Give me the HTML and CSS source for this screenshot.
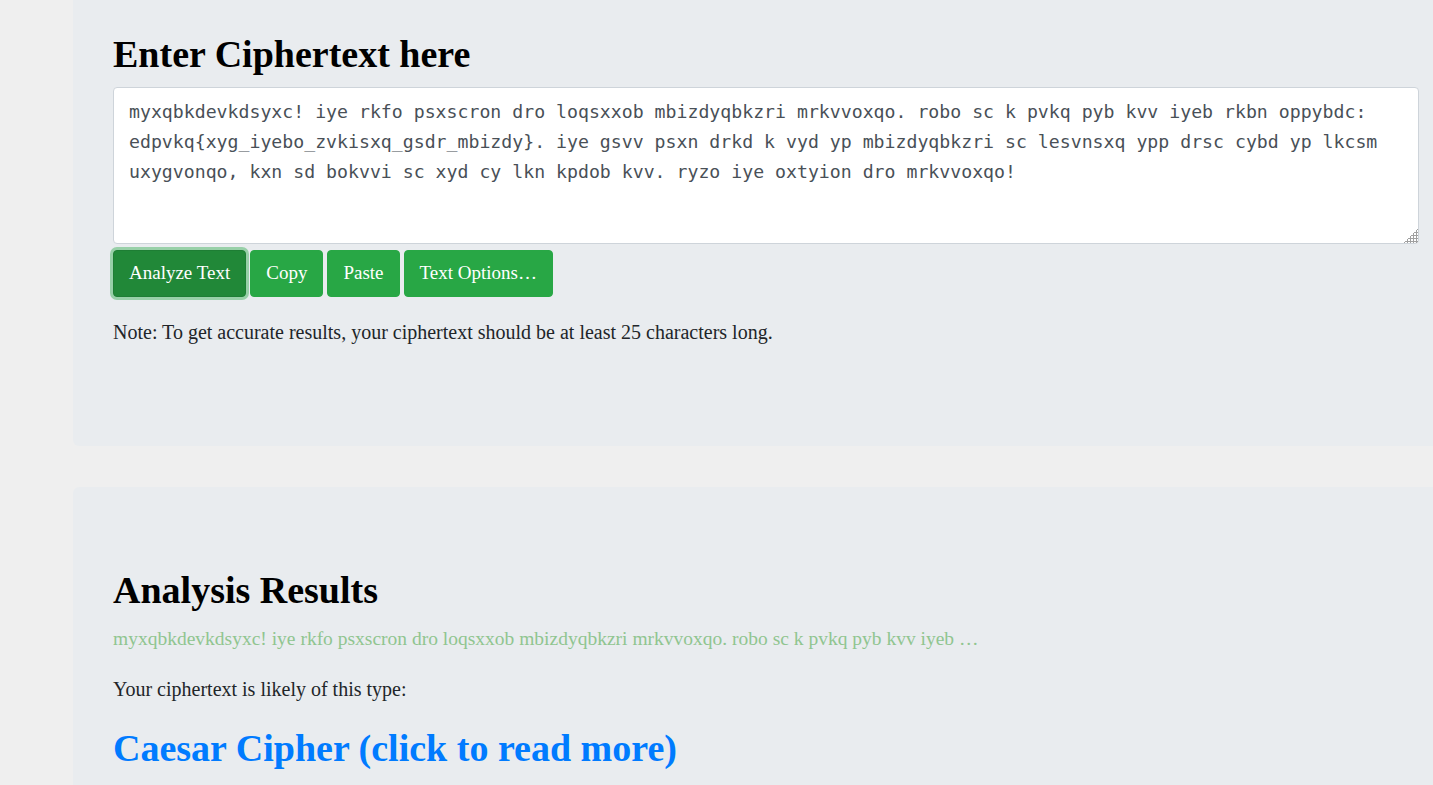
FILE: index.html
```html
<!DOCTYPE html>
<html>
<head>
<meta charset="utf-8">
<title>Cipher Identifier</title>
<link rel="stylesheet" href="styles.css">
</head>
<body>
<div class="page">
  <section class="card card-input">
    <h1 class="title">Enter Ciphertext here</h1>
    <textarea class="cipher-box" spellcheck="false">myxqbkdevkdsyxc! iye rkfo psxscron dro loqsxxob mbizdyqbkzri mrkvvoxqo. robo sc k pvkq pyb kvv iyeb rkbn oppybdc: edpvkq{xyg_iyebo_zvkisxq_gsdr_mbizdy}. iye gsvv psxn drkd k vyd yp mbizdyqbkzri sc lesvnsxq ypp drsc cybd yp lkcsm uxygvonqo, kxn sd bokvvi sc xyd cy lkn kpdob kvv. ryzo iye oxtyion dro mrkvvoxqo!</textarea>
    <div class="btn-row">
      <button class="btn btn-active">Analyze Text</button>
      <button class="btn">Copy</button>
      <button class="btn">Paste</button>
      <button class="btn">Text Options…</button>
    </div>
    <p class="note">Note: To get accurate results, your ciphertext should be at least 25 characters long.</p>
  </section>
  <section class="card card-results">
    <h2 class="title title-results">Analysis Results</h2>
    <p class="preview">myxqbkdevkdsyxc! iye rkfo psxscron dro loqsxxob mbizdyqbkzri mrkvvoxqo. robo sc k pvkq pyb kvv iyeb …</p>
    <p class="likely">Your ciphertext is likely of this type:</p>
    <h2 class="result"><a href="#">Caesar Cipher (click to read more)</a></h2>
  </section>
</div>
</body>
</html>
```
FILE: styles.css
```css
html, body {
  margin: 0;
  padding: 0;
  background: #efefef;
  overflow: hidden;
  height: 785px;
}
body {
  font-family: "Liberation Serif", "Times New Roman", serif;
  color: #212529;
  font-size: 20px;
}
.page {
  padding-left: 73px;
}
.card {
  width: 1386px;
  box-sizing: border-box;
  background: #e9ecef;
  padding: 0 40px;
  border-radius: 6px;
}
.card-input {
  border-radius: 0 0 6px 6px;
  padding-top: 32px;
  padding-bottom: 99px;
}
.card-results {
  margin-top: 41px;
  padding-top: 81px;
  padding-bottom: 40px;
}
.title {
  margin: 0 0 9px 0;
  font-size: 38px;
  line-height: 1.2;
  font-weight: bold;
  color: #000;
}
.title-results {
  margin-bottom: 12px;
}
.cipher-box {
  display: block;
  width: 100%;
  height: 157px;
  box-sizing: border-box;
  margin: 0;
  padding: 9px 15px;
  border: 1px solid #ced4da;
  border-radius: 4px;
  background: #fff;
  color: #495057;
  font-family: "DejaVu Sans Mono", "Liberation Mono", monospace;
  font-size: 18.2px;
  line-height: 30px;
  resize: vertical;
  outline: none;
}
.cipher-box::-webkit-scrollbar {
  width: 14px;
  height: 14px;
  background: transparent;
}
.cipher-box::-webkit-resizer {
  background:
    linear-gradient(to bottom right, #fff 52%, transparent 52%),
    radial-gradient(circle, #a0a0a0 1px, transparent 1.3px) 0 0 / 3px 3px;
}
.btn-row {
  display: flex;
  gap: 4px;
  margin-top: 6px;
}
.btn {
  height: 47px;
  padding: 0 15px;
  border: 1px solid #28a745;
  border-radius: 4px;
  background: #28a745;
  color: #fff;
  font-family: inherit;
  font-size: 19px;
}
.btn-active {
  background: #218838;
  border-color: #1e7e34;
  box-shadow: 0 0 0 3px rgba(72, 180, 97, 0.5);
}
.note {
  margin: 20px 0 0 0;
  line-height: 30px;
}
.preview {
  margin: 0 0 20px 0;
  color: #90c590;
  font-size: 19.5px;
  line-height: 28.5px;
}
.likely {
  margin: 0 0 22px 0;
  line-height: 30px;
}
.result {
  margin: 0;
  font-size: 38px;
  line-height: 1.2;
}
.result a {
  color: #007bff;
  text-decoration: none;
}
```
